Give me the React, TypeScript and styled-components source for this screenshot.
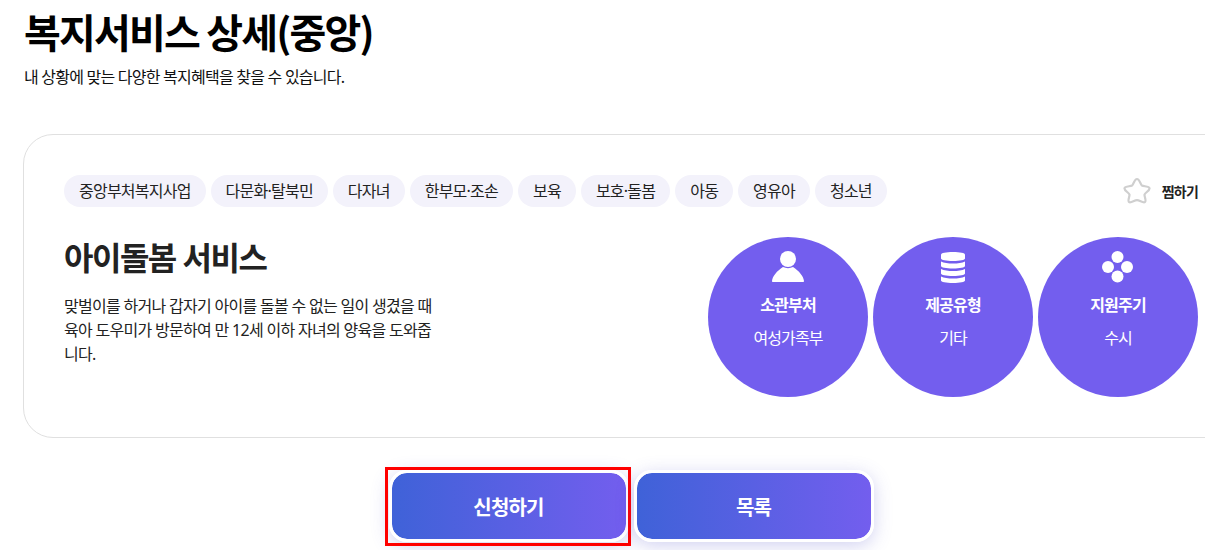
import React from "react";
import styled, { createGlobalStyle } from "styled-components";

const Global = createGlobalStyle`
  html, body { margin: 0; padding: 0; background: #fff; overflow: hidden; }
  body { font-family: "Noto Sans", "Noto Sans CJK KR", sans-serif; color: #111; letter-spacing: -0.04em; }
`;

const Page = styled.div`
  width: 1205px;
  height: 550px;
  overflow: hidden;
  padding: 7px 0 0 23px;
  box-sizing: border-box;
`;
const Title = styled.h1`
  margin: 0 0 0 1px;
  font-family: "Noto Sans CJK KR", sans-serif;
  font-size: 40px;
  line-height: 48px;
  font-weight: 700;
  letter-spacing: -1.8px;
  color: #000;
`;
const Subtitle = styled.p`
  margin: 11px 0 0 1px;
  font-size: 16px;
  line-height: 22px;
  letter-spacing: -0.77px;
  color: #111;
`;
const Card = styled.section`
  margin-top: 46px;
  width: 1240px;
  height: 304px;
  box-sizing: border-box;
  border: 1px solid #e0e0e0;
  border-radius: 30px;
  padding: 40px 0 0 40px;
`;
const Inner = styled.div`
  width: 1134px;
`;
const TopRow = styled.div`
  display: flex;
  align-items: center;
  justify-content: space-between;
`;
const Tags = styled.div`
  display: flex;
  gap: 5px;
`;
const Tag = styled.span`
  height: 32px;
  padding: 0 15px;
  border-radius: 16px;
  background: #f3f2fb;
  font-size: 16px;
  line-height: 32px;
  letter-spacing: -0.77px;
  color: #222;
  white-space: nowrap;
`;
const Like = styled.div`
  display: flex;
  align-items: center;
  gap: 11px;
  font-size: 14px;
  font-weight: 700;
  letter-spacing: -0.8px;
  color: #222;
`;
const Body = styled.div`
  display: flex;
  justify-content: space-between;
  margin-top: 30px;
`;
const Info = styled.div`
  width: 372px;
`;
const Heading = styled.h2`
  margin: 0;
  font-size: 32px;
  line-height: 42px;
  font-weight: 700;
  letter-spacing: -1.5px;
  color: #222;
`;
const Desc = styled.p`
  margin: 15px 0 0;
  font-size: 16px;
  line-height: 24px;
  letter-spacing: -0.7px;
  color: #222;
  word-break: break-all;
`;
const Circles = styled.div`
  display: flex;
  gap: 5px;
`;
const Circle = styled.div`
  width: 160px;
  height: 160px;
  border-radius: 50%;
  background: #735eee;
  color: #fff;
  display: flex;
  flex-direction: column;
  align-items: center;
  padding-top: 13px;
  box-sizing: border-box;
  svg { display: block; }
`;
const CircleTitle = styled.strong`
  margin-top: 10px;
  font-size: 16px;
  line-height: 22px;
  font-weight: 700;
  letter-spacing: -0.8px;
`;
const CircleValue = styled.span`
  margin-top: 11px;
  font-size: 16px;
  line-height: 22px;
  letter-spacing: -0.9px;
`;
const Actions = styled.div`
  width: 1216px;
  display: flex;
  justify-content: center;
  gap: 5px;
  margin-top: 32px;
`;
const Button = styled.button<{ $focused?: boolean }>`
  position: relative;
  width: 240px;
  height: 72px;
  box-sizing: border-box;
  border: 3px solid #fff;
  border-radius: 18px;
  background: linear-gradient(90deg, #3f62d8 0%, #735eee 100%) padding-box;
  box-shadow: 0 4px 18px rgba(80, 80, 200, 0.26);
  color: #fff;
  font-family: inherit;
  font-size: 20px;
  font-weight: 700;
  letter-spacing: -0.8px;
  padding: 0;
  ${(p) =>
    p.$focused
      ? `&::after {
          content: "";
          position: absolute;
          top: -6px;
          left: -7px;
          right: -5px;
          bottom: -7px;
          border: 3px solid #f00;
        }`
      : ""}
`;

const tags = ["중앙부처복지사업", "다문화·탈북민", "다자녀", "한부모·조손", "보육", "보호·돌봄", "아동", "영유아", "청소년"];

const StarIcon = () => (
  <svg width="28" height="28" viewBox="0 0 28 28" fill="none" stroke="#cfcfcf" strokeWidth="2.2" strokeLinejoin="round">
    <path d="M14 2c2.600 0 3.300 5.200 5 6.600 1.900.9 7 .6 7.500 2.600.5 2.100-4.300 4.500-5 6.400-.2 2 2.200 6.300.4 7.500-1.900 1.200-5.300-2-7.900-2s-6 3.200-7.900 2c-1.800-1.200.6-5.500.4-7.500-.7-1.900-5.500-4.300-5-6.400C2 9.200 7.100 9.500 9 8.600 10.700 7.200 11.400 2 14 2z" />
  </svg>
);
const PersonIcon = () => (
  <svg width="34" height="34" viewBox="0 0 34 34" fill="#fff">
    <circle cx="17" cy="9" r="8" />
    <path d="M1 31C1.500 26 6 21 12 17c3 1.500 7 1.500 10 0 6 4 10.500 9 11 14 0 .6-.4 1-1 1H2c-.6 0-1-.4-1-1z" />
  </svg>
);
const DbIcon = () => (
  <svg width="34" height="34" viewBox="0 0 34 34" fill="#fff">
    <path d="M5 4.500C5 3 10 2 17 2s12 1 12 2.500v4C29 10 24 11 17 11S5 10 5 8.500z" />
    <path d="M5 11.500C8 13 12 13.500 17 13.500s9-.5 12-2v4.500c0 1.500-5 2.500-12 2.500S5 17.500 5 16z" />
    <path d="M5 19c3 1.500 7 2 12 2s9-.5 12-2v4.500c0 1.500-5 2.500-12 2.500S5 25 5 23.500z" />
    <path d="M5 26.500c3 1.500 7 2 12 2s9-.5 12-2v4c0 1.500-5 2.500-12 2.500S5 32 5 30.500z" />
  </svg>
);
const DotsIcon = () => (
  <svg width="34" height="34" viewBox="0 0 34 34" fill="#fff">
    <circle cx="16.500" cy="7" r="6" />
    <circle cx="7" cy="17" r="6" />
    <circle cx="26" cy="17" r="6" />
    <circle cx="16.500" cy="26.500" r="6" />
  </svg>
);

export default function App() {
  return (
    <Page>
      <Global />
      <Title>복지서비스 상세(중앙)</Title>
      <Subtitle>내 상황에 맞는 다양한 복지혜택을 찾을 수 있습니다.</Subtitle>
      <Card>
        <Inner>
          <TopRow>
            <Tags>{tags.map((t) => <Tag key={t}>{t}</Tag>)}</Tags>
            <Like><StarIcon />찜하기</Like>
          </TopRow>
          <Body>
            <Info>
              <Heading>아이돌봄 서비스</Heading>
              <Desc>맞벌이를 하거나 갑자기 아이를 돌볼 수 없는 일이 생겼을 때 육아 도우미가 방문하여 만 12세 이하 자녀의 양육을 도와줍니다.</Desc>
            </Info>
            <Circles>
              <Circle><PersonIcon /><CircleTitle>소관부처</CircleTitle><CircleValue>여성가족부</CircleValue></Circle>
              <Circle><DbIcon /><CircleTitle>제공유형</CircleTitle><CircleValue>기타</CircleValue></Circle>
              <Circle><DotsIcon /><CircleTitle>지원주기</CircleTitle><CircleValue>수시</CircleValue></Circle>
            </Circles>
          </Body>
        </Inner>
      </Card>
      <Actions>
        <Button $focused>신청하기</Button>
        <Button>목록</Button>
      </Actions>
    </Page>
  );
}
